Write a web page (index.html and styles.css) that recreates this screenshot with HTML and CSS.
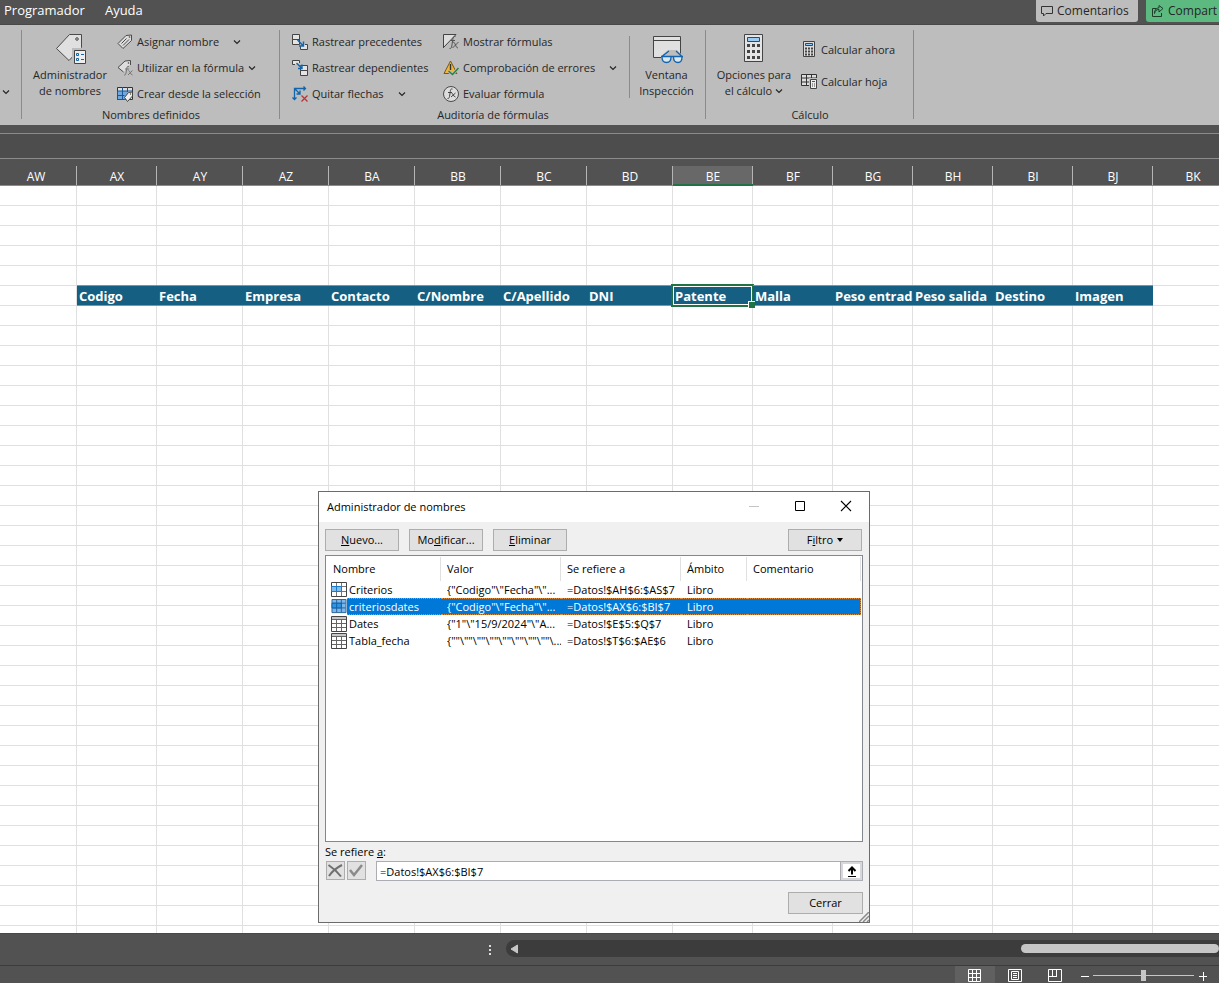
FILE: index.html
```html
<!DOCTYPE html>
<html lang="es">
<head>
<meta charset="utf-8">
<title>Administrador de nombres</title>
<link rel="stylesheet" href="styles.css">
</head>
<body>
<svg class="defs" aria-hidden="true">
  <symbol id="chev" viewBox="0 0 8 6"><path d="M1 1.500l3 3 3-3" fill="none" stroke="#262626" stroke-width="1.200"/></symbol>
  <symbol id="table" viewBox="0 0 16 16"><path d="M.5.5h15v15H.5z" fill="#fff" stroke="#444"/><path d="M1 1h14v2H1z" fill="#c6c6c6"/><path d="M1 3.500h14M1 7.500h14M1 11.500h14M5.500 4v11M10.500 4v11" stroke="#666"/></symbol>
  <symbol id="range" viewBox="0 0 16 16"><path d="M.5.500h15v14H.5z" fill="#fff" stroke="#444"/><path d="M5.500 1v13M10.500 1v13M1 4.500h14M1 9.500h14" stroke="#777"/><path d="M.5 4.500h10v5H.5z" fill="#83bdec" stroke="#1979ca"/><path d="M5.500 4.500v5" stroke="#1979ca"/></symbol>
  <symbol id="range-on" viewBox="0 0 16 16"><path d="M.5.500h15v14H.5z" fill="#7ab8ec" stroke="#286098"/><path d="M5.500 1v13M10.500 1v13M1 4.500h14M1 9.500h14" stroke="#286098"/><path d="M.5 4.500h10v5H.5z" fill="#3394e0" stroke="#0b60ae"/><path d="M5.500 4.500v5" stroke="#0b60ae"/></symbol>
</svg>
<header class="topbar">
  <nav class="tabs"><button>Programador</button><button>Ayuda</button></nav>
  <div class="actions">
    <button class="comments"><svg width="12" height="12" viewBox="0 0 12 12"><path d="M.5 1.500h11v7H5l-2.500 2.500V8.500h-2z" fill="none" stroke="#333"/></svg>Comentarios</button>
    <button class="share"><svg width="13" height="12" viewBox="0 0 13 12"><path d="M5 3.500H1.500v8h9V8M3.500 8.500C4 5.500 5.500 4.500 8 4.500v2.500l4-3.500-4-3v2.300C5 3 3.500 5 3.500 8.500z" fill="none" stroke="#1d3d29"/></svg>Compart</button>
  </div>
</header>
<section class="ribbon">
  <div class="group edge"><button class="more" aria-label="Más"><svg class="chev"><use href="#chev"/></svg></button></div>
  <div class="group names">
    <div class="tools">
      <button class="big">
        <svg width="32" height="32" viewBox="0 0 32 32"><path d="M1.500 15.500L14.500 1.500h12v13L14 27.500z" fill="#e0e0e0" stroke="#4a4a4a"/><circle cx="22" cy="6" r="1.300" fill="#ccc" stroke="#4a4a4a"/><path d="M18.500 16.500h12v14h-12z" fill="#eee" stroke="#bdbdbd" stroke-width="3"/><path d="M19.500 17.500h11v13h-11z" fill="#eee" stroke="#444"/><path d="M21.500 20.500h2v2h-2zM21.500 25.500h2v2h-2z" fill="none" stroke="#1264ab"/><path d="M26 21.500h3M26 26.500h3" stroke="#1264ab"/></svg>
        <span>Administrador<br>de nombres</span>
      </button>
      <div class="col">
        <button class="row"><svg width="16" height="16" viewBox="0 0 16 16"><path d="M1 9.500L9 1.500l5.500-.5v5.500L6 14.500z" fill="#ddd" stroke="#4a4a4a"/><path d="M4.500 9.500l5-5M6 11.500l6-6" stroke="#4a4a4a"/><circle cx="12.500" cy="3" r=".8" fill="#444"/></svg>Asignar nombre<svg class="chev gap"><use href="#chev"/></svg></button>
        <button class="row"><svg width="16" height="16" viewBox="0 0 16 16"><path d="M7 12L1 7.500 8 1l5.500-.5V5l-3 1L7 12" fill="#ddd"/><path d="M6.500 12L1 7.500 8 1l5.500-.5V5" fill="none" stroke="#4a4a4a"/><circle cx="11.500" cy="3" r=".8" fill="#444"/><path d="M12 6.500c-2-.5-2 .5-2.200 2l-.8 4.500c-.3 1.500-1 2.500-2 2M8 9h4M11.500 10.500c1.500 0 2 4.500 4 4.500M15.500 10.500L11 15" fill="none" stroke="#777"/></svg>Utilizar en la fórmula<svg class="chev"><use href="#chev"/></svg></button>
        <button class="row"><svg width="16" height="16" viewBox="0 0 16 16"><path d="M.5 1.500h15v12H.5z" fill="#ddd" stroke="#333"/><path d="M1 5h10v8.500H1z" fill="#6fa8de"/><path d="M5.500 1v12.500M10.500 1v5M.5 5h15M.5 9.500h7M.5 5v8.500h7" fill="none" stroke="#1b5597"/><path d="M7.500 11.500l4-5 4-.5v4l-5 5.500z" fill="#eee" stroke="#444"/><circle cx="13.500" cy="8" r=".7" fill="#444"/></svg>Crear desde la selección</button>
      </div>
    </div>
    <h2>Nombres definidos</h2>
  </div>
  <div class="group audit">
    <div class="tools">
      <div class="col trace">
        <button class="row"><svg width="16" height="16" viewBox="0 0 16 16"><path d="M.5.5h7v5h-7zM.5 5.500h7v5h-7z" fill="#e4e4e4" stroke="#444"/><path d="M8.500 12v3.500h7v-5H13" fill="#e4e4e4" stroke="#444"/><path d="M5.500 6l5.500 5.500M11.500 7.500v4.500H7" fill="none" stroke="#1264ab" stroke-width="1.400"/></svg>Rastrear precedentes</button>
        <button class="row"><svg width="16" height="16" viewBox="0 0 16 16"><path d="M3 4.500H.5v-4h7V3" fill="#e4e4e4" stroke="#444"/><path d="M8.500 5.500h7v5h-7zM8.500 10.500h7v5h-7z" fill="#e4e4e4" stroke="#444"/><path d="M4.500 3l5 5M10 4.500v4H6" fill="none" stroke="#1264ab" stroke-width="1.400"/></svg>Rastrear dependientes</button>
        <button class="row"><svg width="16" height="16" viewBox="0 0 16 16"><path d="M2.500 13.500V2.500H13.500M11.500.5l2 2-2 2M.5 11.500l2 2 2-2M3 3l4.500 4.500M8 4.500V8H4.500" fill="none" stroke="#1264ab" stroke-width="1.300"/><path d="M9.500 9.500l6 6M15.500 9.500l-6 6" stroke="#b93438" stroke-width="1.300"/></svg>Quitar flechas<svg class="chev gap"><use href="#chev"/></svg></button>
      </div>
      <div class="col check">
        <button class="row"><svg width="16" height="16" viewBox="0 0 16 16"><path d="M.5 13V.5H13z" fill="#ddd"/><path d="M.5 14V.5H13L.5 13.500" fill="none" stroke="#444"/><path d="M12.500 2.500c-2-.5-2.500 1-2.700 3l-1 6.500c-.3 2-1 2.700-2.300 2.500M7.500 6.500H12M10 8c2.500 0 2.500 6 5 6M15.500 8L9.500 14" fill="none" stroke="#555"/></svg>Mostrar fórmulas</button>
        <button class="row"><svg width="16" height="16" viewBox="0 0 16 16"><path d="M1 13.500L7.500 1 14 13.500z" fill="#f0b73b" stroke="#77571b"/><path d="M7.500 4v6M7.500 11.500V13" stroke="#333" stroke-width="1.400"/><path d="M5.500 11l4 3.500L15.500 8" fill="none" stroke="#bdbdbd" stroke-width="3"/><path d="M5.500 11l4 3.500L15.500 8" fill="none" stroke="#258044" stroke-width="1.400"/></svg>Comprobación de errores<svg class="chev gap"><use href="#chev"/></svg></button>
        <button class="row"><svg width="16" height="16" viewBox="0 0 16 16"><circle cx="8" cy="8" r="7.500" fill="#ddd" stroke="#4a4a4a"/><path d="M9.500 3c-2-.5-2 1-2.200 2.500l-.8 5c-.3 1.500-1 2.500-2 2M5 6.500h4M8.500 7c1.500 0 2 4 4 4M12.500 7L8 11" fill="none" stroke="#444"/></svg>Evaluar fórmula</button>
      </div>
      <button class="big watch">
        <svg width="32" height="32" viewBox="0 0 32 32"><path d="M2.500 3.500h27v21h-27z" fill="#e0e0e0" stroke="#444"/><path d="M3 7.500h26" stroke="#444"/><path d="M10 23l7-6h9l6 6v7H10z" fill="#bdbdbd"/><path d="M11 24c0 4 1.500 5.500 4.500 5.500s4.500-2 4.500-5.500zM22.500 24c0 4 1.500 5.500 4.500 5.500s4-2 4-5.500z" fill="#dce6ee"/><path d="M10 23.500h22M11.500 23l6.500-5M30.500 23L25 18M11 24c0 4 1.500 5.500 4.500 5.500s4.500-2 4.500-5.500M22.500 24c0 4 1.500 5.500 4.500 5.500s4-2 4-5.500" fill="none" stroke="#1264ab" stroke-width="1.300"/></svg>
        <span>Ventana<br>Inspección</span>
      </button>
    </div>
    <h2>Auditoría de fórmulas</h2>
  </div>
  <div class="group calc">
    <div class="tools">
      <button class="big">
        <svg width="32" height="32" viewBox="0 0 32 32"><path d="M6.500 1.500h18v27h-18z" fill="#e4e4e4" stroke="#444"/><path d="M9.500 4.500h12v4h-12z" fill="#9cccf2" stroke="#174f80"/><path d="M9 12.500h13M9 18.500h13M9 24.500h13" stroke="#444" stroke-width="3" stroke-dasharray="3 2"/></svg>
        <span>Opciones para<br>el cálculo<svg class="chev"><use href="#chev"/></svg></span>
      </button>
      <div class="col wide">
        <button class="row"><svg width="16" height="16" viewBox="0 0 16 16"><path d="M2.500.5h11v15h-11z" fill="#ddd" stroke="#444"/><path d="M4.500 2.500h7v2h-7z" fill="#9cccf2" stroke="#174f80"/><path d="M4 7.500h8M4 10.500h8M4 13.500h8" stroke="#444" stroke-width="2" stroke-dasharray="2 1"/></svg>Calcular ahora</button>
        <button class="row"><svg width="16" height="16" viewBox="0 0 16 16"><path d="M.5 1.500h15v11H.5z" fill="#ddd" stroke="#333"/><path d="M5.500 1v12M10.500 1v5M.5 5h15M.5 9h8" stroke="#333"/><path d="M9.500 6.500h6v9h-6z" fill="#eee" stroke="#bdbdbd" stroke-width="3"/><path d="M9.500 6.500h6v9h-6z" fill="#eee" stroke="#444"/><path d="M11 8.500h3" stroke="#1264ab"/><path d="M11 11h4M11 13h4" stroke="#444" stroke-dasharray="1 1"/></svg>Calcular hoja</button>
      </div>
    </div>
    <h2>Cálculo</h2>
  </div>
</section>
<div class="formula-strip"></div>
<main class="sheet">
  <table class="grid">
    <colgroup><col class="c-first"><col class="c-80"><col class="c-86" span="6"><col class="c-80" span="7"></colgroup>
    <thead><tr><th>AW</th><th>AX</th><th>AY</th><th>AZ</th><th>BA</th><th>BB</th><th>BC</th><th>BD</th><th class="current">BE</th><th>BF</th><th>BG</th><th>BH</th><th>BI</th><th>BJ</th><th>BK</th></tr></thead>
    <tbody id="cells"></tbody>
  </table>
</main>
<div class="scroll-row"><i class="dots"></i><div class="track"><svg width="8" height="10" viewBox="0 0 8 10"><path d="M7.500 1v8L1 5z" fill="#c6c6c6" stroke="#c6c6c6"/></svg><i class="thumb"></i></div></div>
<footer class="status">
  <button class="view on" aria-label="Normal"><svg width="14" height="14" viewBox="0 0 14 14"><path d="M.5.5h12v12H.5zM4.500 0v13M8.500 0v13M0 4.500h13M0 8.500h13" fill="none" stroke="#fff"/></svg></button>
  <button class="view" aria-label="Diseño de página"><svg width="14" height="14" viewBox="0 0 14 14"><path d="M.5.5h13v12H.5zM3.500 2.500h7v8h-7zM5 4.500h4M5 6.500h4M5 8.500h4" fill="none" stroke="#fff"/></svg></button>
  <button class="view" aria-label="Salto de página"><svg width="14" height="14" viewBox="0 0 14 14"><path d="M.5.5h13v12H.5zM4.500 0v7M8.500 0v7M0 7.500h9" fill="none" stroke="#fff"/></svg></button>
  <button class="zoom" aria-label="Alejar"><svg width="10" height="10" viewBox="0 0 10 10"><path d="M1 5.500h8" stroke="#fff"/></svg></button>
  <input class="slider" type="range" min="0" max="100" value="50" aria-label="Zoom">
  <button class="zoom" aria-label="Acercar"><svg width="10" height="10" viewBox="0 0 10 10"><path d="M1 5.500h8M5.500 1v9" stroke="#fff"/></svg></button>
</footer>

<section class="dialog" role="dialog" aria-labelledby="dlg-title">
  <div class="titlebar">
    <h1 id="dlg-title">Administrador de nombres</h1>
    <button aria-label="Minimizar"><svg width="12" height="12" viewBox="0 0 12 12"><path d="M1 6.500h10" stroke="#c4c4c4"/></svg></button>
    <button aria-label="Maximizar"><svg width="12" height="12" viewBox="0 0 12 12"><path d="M1.500 1.500h9v9h-9z" fill="none" stroke="#000"/></svg></button>
    <button aria-label="Cerrar ventana"><svg width="12" height="12" viewBox="0 0 12 12"><path d="M1 1l10 10M11 1L1 11" stroke="#000" stroke-width="1.100"/></svg></button>
  </div>
  <div class="content">
    <div class="commands">
      <button class="btn"><u>N</u>uevo...</button><button class="btn">Mo<u>d</u>ificar...</button><button class="btn"><u>E</u>liminar</button>
      <button class="btn filter"><span>F<u>i</u>ltro</span><i class="caret"></i></button>
    </div>
    <div class="list">
      <table class="names-table">
        <colgroup><col class="n-name"><col class="n-val"><col class="n-val"><col class="n-scope"><col class="n-note"></colgroup>
        <thead><tr><th>Nombre</th><th>Valor</th><th>Se refiere a</th><th>Ámbito</th><th>Comentario</th></tr></thead>
        <tbody>
          <tr><td><svg><use href="#range"/></svg>Criterios</td><td>{"Codigo"\"Fecha"\"...</td><td>=Datos!$AH$6:$AS$7</td><td>Libro</td><td></td></tr>
          <tr class="selected"><td><svg><use href="#range-on"/></svg>criteriosdates</td><td>{"Codigo"\"Fecha"\"...</td><td>=Datos!$AX$6:$BI$7</td><td>Libro</td><td></td></tr>
          <tr><td><svg><use href="#table"/></svg>Dates</td><td>{"1"\"15/9/2024"\"A...</td><td>=Datos!$E$5:$Q$7</td><td>Libro</td><td></td></tr>
          <tr><td><svg><use href="#table"/></svg>Tabla_fecha</td><td>{""\""\""\""\""\""\""\""\...</td><td>=Datos!$T$6:$AE$6</td><td>Libro</td><td></td></tr>
        </tbody>
      </table>
    </div>
    <label class="ref-label" for="ref">Se refiere <u>a</u>:</label>
    <div class="ref-row">
      <button class="mini" aria-label="Cancelar"><svg width="17" height="17" viewBox="0 0 17 17"><path d="M1.500 3c3 2 9 7 12.500 11.500M15 3C10 5.500 5 9.500 2 14" fill="none" stroke="#707070" stroke-width="2"/></svg></button>
      <button class="mini" aria-label="Aceptar"><svg width="17" height="17" viewBox="0 0 17 17"><path d="M2 8l4 5 8-10" fill="none" stroke="#8a8a8a" stroke-width="2.500"/></svg></button>
      <div class="field"><input id="ref" type="text" value="=Datos!$AX$6:$BI$7"><button aria-label="Contraer"><svg width="10" height="11" viewBox="0 0 10 11"><path d="M5 2v6.500M1.500 5L5 1.500 8.500 5" fill="none" stroke="#000" stroke-width="2"/><path d="M1 10.500h8" stroke="#000"/></svg></button></div>
    </div>
    <div class="close-row"><button class="btn">Cerrar</button></div>
  </div>
  <svg class="grip" width="10" height="10" viewBox="0 0 10 10"><path d="M0 10L10 0M4 10l6-6M8 10l2-2" stroke="#8a8a8a" stroke-width="1.500"/></svg>
</section>
<script src="sheet.js"></script>
</body>
</html>
```
FILE: styles.css
```css
* { box-sizing: border-box; }
body {
  margin: 0;
  height: 100vh;
  display: flex;
  flex-direction: column;
  overflow: hidden;
  position: relative;
  background: #525252;
  font-family: "Open Sans", "Noto Sans", sans-serif;
  font-size: 12px;
  color: #262626;
}
button, input { font: inherit; color: inherit; }
button { border: 0; padding: 0; background: none; white-space: nowrap; }
h1, h2 { margin: 0; font-size: inherit; font-weight: 400; }
svg { flex: none; }
.defs { position: absolute; width: 0; height: 0; }
.chev { width: 8px; height: 6px; }

.topbar {
  flex: none;
  display: flex;
  justify-content: space-between;
  height: 25px;
  border-bottom: 1px solid #484848;
}
.tabs { display: flex; gap: 20px; padding: 0 4px; font-size: 13px; color: #fff; height: 20px; }
.actions { display: flex; gap: 8px; height: 22px; }
.actions button { display: flex; align-items: center; gap: 4px; padding: 0 5px 1px; border-radius: 0 0 3px 3px; background: #bdbdbd; }
.actions .comments { width: 102px; }
.actions .share { width: 73px; border-radius: 0 0 0 3px; background: #5cba80; }

.ribbon { flex: none; display: flex; height: 100px; padding-top: 4px; background: #bdbdbd; font-size: 11px; }
.group { position: relative; display: flex; flex-direction: column; }
.group::after {
  content: "";
  position: absolute;
  top: 1px;
  right: 0;
  width: 1px;
  height: 89px;
  background: #8b8b8b;
}
.edge { width: 22px; }
.more { padding: 54px 0 0 2px; text-align: left; }
.names { width: 258px; }
.audit { width: 426px; }
.calc { width: 208px; }
.tools { display: flex; height: 78px; }
.group h2 { line-height: 16px; text-align: center; }
.big { display: flex; flex-direction: column; align-items: center; justify-content: flex-start; width: 96px; padding-top: 4px; line-height: 16px; }
.big span { margin-top: 2px; }
.big .chev { margin-left: 3px; vertical-align: 1px; }
.names .big svg { margin-left: 2px; }
.col { display: flex; flex-direction: column; }
.row { display: flex; align-items: center; gap: 4px; height: 26px; padding-bottom: 1px; }
.row .gap { margin-left: 10px; }
.names .col { margin-left: -1px; }
.trace { width: 151px; margin-left: 12px; }
.check { width: 187px; }
.watch { position: relative; width: 73px; }
.watch::before { content: ""; position: absolute; left: -1px; top: 7px; width: 1px; height: 62px; background: #8b8b8b; }
.calc .col { padding-top: 4px; margin-left: -1px; }
.calc .row { height: 32px; padding-bottom: 0; }

.formula-strip { flex: none; height: 26px; margin-top: 8px; border: 1px solid #8b8b8b; border-width: 1px 0; background: #4d4d4d; }

.sheet { flex: 1; min-height: 0; overflow: hidden; background: #fff; }
.grid { table-layout: fixed; width: 1233px; border-collapse: separate; border-spacing: 0; }
.c-first { width: 77px; }
.c-80 { width: 80px; }
.c-86 { width: 86px; }
.grid th {
  height: 27px;
  padding: 7px 0 0;
  background:
    linear-gradient(#8b8b8b, #8b8b8b) bottom / 100% 1px no-repeat,
    linear-gradient(#b5b5b5, #b5b5b5) right 7px / 1px 19px no-repeat,
    #525252;
  color: #fff;
  font-weight: 400;
  line-height: 19px;
}
.grid th:first-child { padding-right: 5px; }
.grid th.current {
  background:
    linear-gradient(#217346, #217346) bottom / 100% 2px no-repeat,
    linear-gradient(#b5b5b5, #b5b5b5) right 7px / 1px 19px no-repeat,
    linear-gradient(#686868, #686868) 0 7px / 100% 20px no-repeat,
    #525252;
}
.grid td { height: 20px; padding: 0; border: solid #e0e0e0; border-width: 0 1px 1px 0; line-height: 19px; }
.grid td.head {
  position: relative;
  padding-left: 2px;
  border-width: 0 0 1px;
  border-color: #3fa9dc;
  box-shadow: 0 -1px #3fa9dc;
  background: #156082;
  color: #fff;
  font-size: 13px;
  font-weight: 700;
  white-space: nowrap;
}
.grid td.head span { display: block; height: 19px; line-height: 20px; overflow: hidden; }
.grid td.active::before { content: ""; position: absolute; inset: -2px -1px -2px -2px; border: 2px solid #217346; outline: 1px solid #fff; outline-offset: -3px; }
.grid td.active::after { content: ""; position: absolute; right: -2px; bottom: -3px; width: 6px; height: 6px; border: solid #fff; border-width: 1px 0 0 1px; background: #217346; z-index: 1; }

.scroll-row { flex: none; display: flex; align-items: center; height: 32px; padding: 0 0 2px 488px; border-top: 1px solid #484848; }
.dots { width: 2px; height: 10px; margin: 2px 15px 0 1px; background: repeating-linear-gradient(#ddd 0 2px, transparent 2px 4px); }
.track { flex: 1; display: flex; align-items: center; justify-content: space-between; height: 17px; padding-left: 4px; border-radius: 9px 0 0 9px; background: #3c3c3c; }
.thumb { width: 198px; height: 9px; border-radius: 5px; background: #c6c6c6; }
.status { flex: none; display: flex; align-items: center; justify-content: flex-end; height: 18px; padding-right: 10px; border-top: 1px solid #3c3c3c; }
.view { display: grid; place-items: center; width: 40px; height: 17px; padding-top: 2px; }
.view.on { background: #606060; }
.zoom { display: grid; place-items: center; width: 13px; height: 17px; padding-top: 3px; }
.view + .zoom { margin-left: 3px; }
.slider { appearance: none; width: 101px; height: 17px; margin: 2px 2px 0; background: linear-gradient(#c6c6c6, #c6c6c6) center / 100% 1px no-repeat; }
.slider::-webkit-slider-thumb { appearance: none; width: 5px; height: 11px; background: #c6c6c6; }

.dialog { position: absolute; left: 318px; top: 491px; width: 552px; border: 1px solid #6b6b6b; background: #f0f0f0; color: #000; font-size: 11px; }
.titlebar { display: flex; align-items: center; height: 30px; padding: 0 0 2px 8px; background: #fff; }
.titlebar h1 { flex: 1; }
.titlebar button { display: grid; place-items: center; width: 46px; height: 28px; }
.content { padding: 7px 6px 8px; }
.commands { display: flex; gap: 10px; padding-bottom: 4px; }
.btn { width: 75px; height: 22px; padding-bottom: 1px; border: 1px solid #adadad; background: #e1e1e1; }
.commands .btn { width: 74px; }
.filter { display: flex; align-items: center; justify-content: center; gap: 4px; margin-left: auto; margin-right: 1px; }
.caret { border: 3px solid transparent; border-top: 4px solid #000; border-bottom: 0; }
.list { height: 287px; padding-right: 1px; border: 1px solid #828790; background: #fff; }
.names-table { table-layout: fixed; width: 100%; border-collapse: separate; border-spacing: 0; text-align: left; white-space: nowrap; }
.n-name { width: 115px; }
.n-val { width: 120px; }
.n-scope { width: 66px; }
.names-table th { height: 25px; padding: 0 0 0 6px; font-weight: 400; background: linear-gradient(#e0e0e0, #e0e0e0) right 1px / 1px 24px no-repeat; }
.names-table th:first-child { padding-left: 7px; }
.names-table td { height: 17px; padding: 0 0 0 6px; line-height: 16px; overflow: hidden; }
.names-table td:first-child { padding-left: 5px; }
.names-table td svg { width: 16px; height: 16px; margin-right: 2px; vertical-align: top; }
.selected td { border: dotted #e08a3c; border-width: 1px 0; background: #0078d7; color: #fff; line-height: 15px; }
.names-table .selected td { height: 17px; line-height: 15px; }
.names-table .selected svg { height: 15px; }
.selected td:first-child { border: 0; background:
  repeating-linear-gradient(90deg, #e08a3c 0 1px, #0078d7 1px 2px) 21px 0 / 100% 1px no-repeat,
  repeating-linear-gradient(90deg, #e08a3c 0 1px, #0078d7 1px 2px) 21px 100% / 100% 1px no-repeat,
  linear-gradient(#0078d7, #0078d7) 21px 0 no-repeat; }
.selected td:last-child { border-right-width: 1px; }
.ref-label { display: block; height: 19px; line-height: 20px; }
.ref-row { display: flex; align-items: flex-start; gap: 2px; height: 20px; padding-left: 1px; }
.mini { display: grid; place-items: center; width: 19px; height: 19px; border: 1px solid #adadad; background: #e1e1e1; }
.field { flex: 1; display: flex; height: 20px; margin-left: 8px; border: 1px solid #abadb3; background: #fff; }
.field input { flex: 1; min-width: 0; border: 0; padding: 1px 3px 0; background: none; outline: 0; }
.field button { display: grid; place-items: center; width: 21px; border: 2px solid #d8d8dc; outline: 1px solid #abadb3; background: #fff; }
.close-row { display: flex; justify-content: flex-end; padding-top: 11px; }
.grip { position: absolute; right: 0; bottom: 0; }
```
FILE: sheet.js
```js
const headings = { 1: "Codigo", 2: "Fecha", 3: "Empresa", 4: "Contacto", 5: "C/Nombre", 6: "C/Apellido", 7: "DNI", 8: "Patente", 9: "Malla", 10: "Peso entrada", 11: "Peso salida", 12: "Destino", 13: "Imagen" };
const headingRow = 5;
const activeColumn = 8;
const body = document.getElementById("cells");
for (let r = 0; r < 60; r++) {
  const row = body.insertRow();
  for (let c = 0; c < 15; c++) {
    const cell = row.insertCell();
    if (r === headingRow && headings[c]) {
      cell.className = c === activeColumn ? "head active" : "head";
      const text = document.createElement("span");
      text.textContent = headings[c];
      cell.append(text);
    }
  }
}
```
